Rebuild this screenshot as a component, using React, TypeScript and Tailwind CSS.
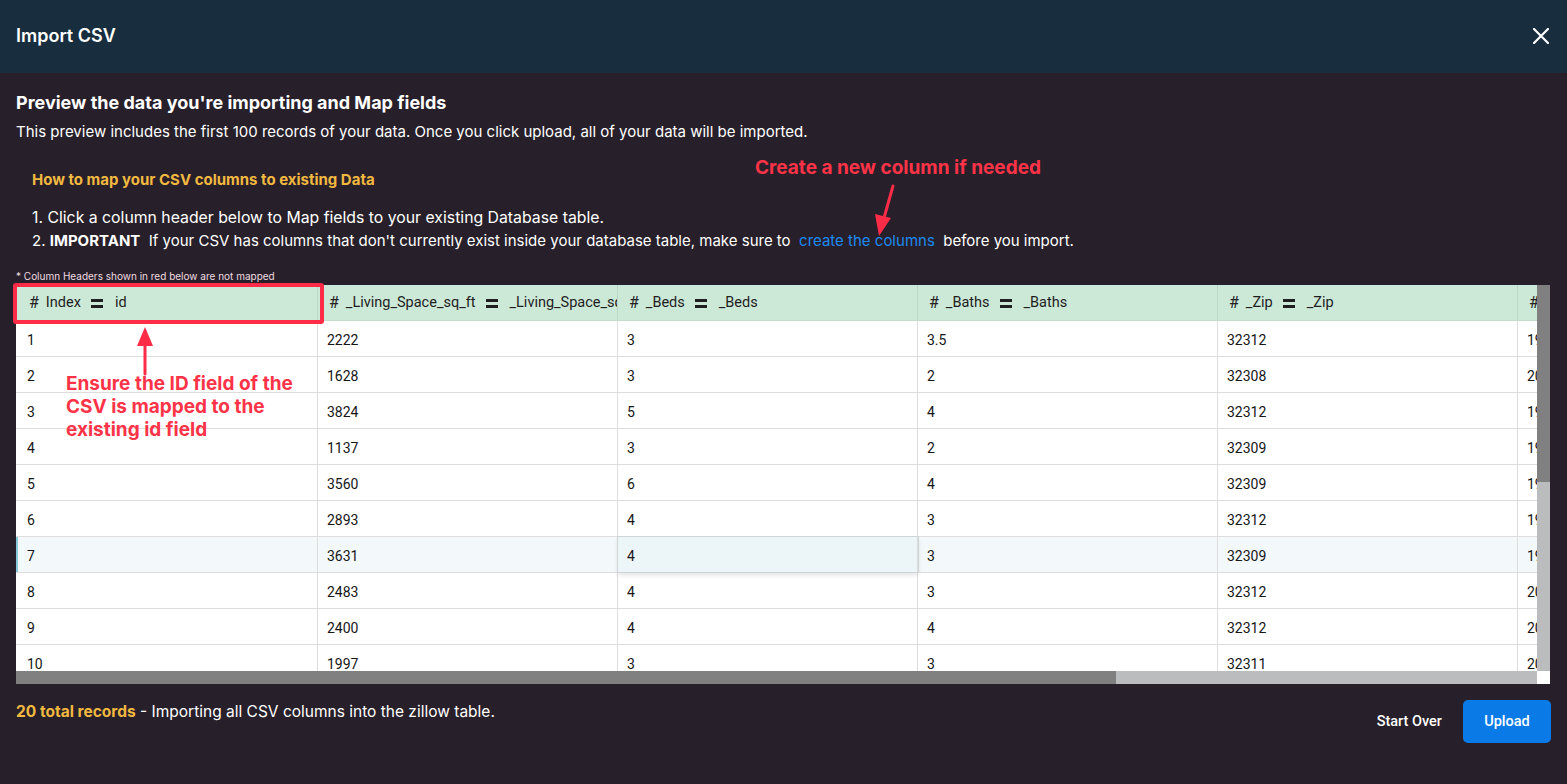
import React from "react";

const rows: [string, string, string, string, string, string][] = [
  ["1", "2222", "3", "3.5", "32312", "1998"],
  ["2", "1628", "3", "2", "32308", "2006"],
  ["3", "3824", "5", "4", "32312", "1995"],
  ["4", "1137", "3", "2", "32309", "1987"],
  ["5", "3560", "6", "4", "32309", "1999"],
  ["6", "2893", "4", "3", "32312", "1992"],
  ["7", "3631", "4", "3", "32309", "1996"],
  ["8", "2483", "4", "3", "32312", "2004"],
  ["9", "2400", "4", "4", "32312", "2008"],
  ["10", "1997", "3", "3", "32311", "2002"],
];

const headers: [string, string][] = [
  ["Index", "id"],
  ["_Living_Space_sq_ft", "_Living_Space_sq_ft"],
  ["_Beds", "_Beds"],
  ["_Baths", "_Baths"],
  ["_Zip", "_Zip"],
  ["_Year_Built", "_Year_Built"],
];

function EqIcon() {
  return (
    <svg width="12" height="9" viewBox="0 0 12 9" className="ml-[10px] mr-[12px] shrink-0">
      <rect x="0" y="0" width="12" height="3" fill="#1f1f1f" />
      <rect x="0" y="6" width="12" height="3" fill="#1f1f1f" />
    </svg>
  );
}

function HeaderCell({ name, mapped, first }: { name: string; mapped: string; first?: boolean }) {
  return (
    <div
      className={`flex items-center h-full pt-[1px] overflow-hidden whitespace-nowrap border-r border-[#b9d8c6] ${
        first ? "pl-[13px]" : "pl-[11px]"
      }`}
    >
      <span className="text-[16px] leading-none mr-[7px] text-[#222]">#</span>
      <span>{name}</span>
      <EqIcon />
      <span>{mapped}</span>
    </div>
  );
}

export default function App() {
  return (
    <div className="relative w-[1567px] h-[784px] overflow-hidden bg-[#271f29] font-['Inter',sans-serif] flex flex-col">
      {/* Header */}
      <div className="h-[73px] shrink-0 bg-[#182d3e] flex items-center justify-between pl-4 pr-[18px] pb-[2px]">
        <div className="text-white text-[18px] font-semibold">Import CSV</div>
        <svg width="16" height="16" viewBox="0 0 16 16" className="mt-[1px]">
          <path d="M1 1 L15 15 M15 1 L1 15" stroke="white" strokeWidth="2.2" strokeLinecap="square" />
        </svg>
      </div>

      {/* Body */}
      <div className="flex-1 px-4 pt-[18px]">
        <h2 className="text-white text-[18px] font-bold leading-[24px]">
          Preview the data you're importing and Map fields
        </h2>
        <p className="mt-[7px] text-white text-[15px] leading-[20px]">
          This preview includes the first 100 records of your data. Once you click upload, all of your data will be
          imported.
        </p>

        <div className="pl-4 mt-[28px]">
          <div className="text-[#f2b941] text-[15px] font-bold leading-[20px]">
            How to map your CSV columns to existing Data
          </div>
          <div className="mt-[16px] text-white text-[15px] leading-[23px]">
            <div className="text-[15.8px]">
              1. Click a column header below to Map fields to your existing Database table.
            </div>
            <div>
              2. <span className="font-bold">IMPORTANT</span>&nbsp; If your CSV has columns that don't currently exist
              inside your database table, make sure to&nbsp;{" "}
              <span className="text-[#1d8af0]">create the columns</span>&nbsp; before you import.
            </div>
          </div>
        </div>

        <div className="mt-[17px] text-[10px] leading-[14px] text-[#f0dce2]">
          * Column Headers shown in red below are not mapped
        </div>

        {/* Table */}
        <div className="mt-[2px] w-[1534px] h-[399px] flex flex-col font-['Roboto',sans-serif]">
          <div className="flex h-[386px]">
            <div className="w-[1521px] h-[386px] overflow-hidden bg-white">
              <div className="w-[1802px]">
                <div className="grid grid-cols-[302px_300px_300px_300px_300px_300px] h-[36px] bg-[#cce8d7] border-b border-[#c4dccd] text-[14.5px] text-[#1e1e1e]">
                  {headers.map((h, i) => (
                    <HeaderCell key={i} name={h[0]} mapped={h[1]} first={i === 0} />
                  ))}
                </div>
                {rows.map((r, ri) => {
                  const hl = ri === 6;
                  return (
                    <div
                      key={ri}
                      className={`grid grid-cols-[302px_300px_300px_300px_300px_300px] h-[36px] border-b border-[#dddddd] text-[14px] text-[#161616] ${
                        hl ? "bg-[#f3f8fa]" : "bg-white"
                      }`}
                    >
                      {r.map((c, ci) => {
                        const sel = hl && ci === 2;
                        return (
                          <div
                            key={ci}
                            className={`flex items-center h-full pt-[3px] whitespace-nowrap overflow-hidden border-r border-[#dddddd] ${
                              ci === 0 ? "pl-[11px]" : "pl-[9px]"
                            } ${hl && ci === 0 ? "shadow-[inset_2px_0_0_#86c9db]" : ""} ${
                              sel
                                ? "relative z-10 bg-[#ecf5f7] shadow-[0_0_0_1px_#cfd5d7,0_3px_5px_rgba(0,0,0,0.12)]"
                                : ""
                            }`}
                          >
                            {c}
                          </div>
                        );
                      })}
                    </div>
                  );
                })}
              </div>
            </div>
            <div className="w-[13px] h-[386px] flex flex-col">
              <div className="h-[197px] bg-[#808080]" />
              <div className="flex-1 bg-[#bbbcbe]" />
            </div>
          </div>
          <div className="flex h-[13px]">
            <div className="w-[1100px] bg-[#808080]" />
            <div className="w-[421px] bg-[#bbbcbe]" />
            <div className="w-[13px] bg-white" />
          </div>
        </div>

        {/* Footer */}
        <div className="mt-[16px] flex justify-between items-start">
          <div className="text-[15.5px] leading-[24px] text-white">
            <span className="font-bold text-[#f2b941]">20 total records</span> - Importing all CSV columns into the
            zillow table.
          </div>
          <div className="flex items-center gap-[9px] font-['Roboto',sans-serif]">
            <button className="h-[43px] px-3 text-white text-[14.5px] font-medium">Start Over</button>
            <button className="h-[43px] w-[88px] rounded-[5px] bg-[#0a7be6] text-white text-[14.5px] font-medium">
              Upload
            </button>
          </div>
        </div>
      </div>

      {/* Annotations */}
      <div className="absolute left-[13px] top-[283px] w-[311px] h-[41px] border-4 border-[#fe2c46] rounded-[3px]" />

      <div className="absolute left-[755px] top-[156px] text-[19px] leading-[23px] font-bold text-[#fe3347] whitespace-nowrap">
        Create a new column if needed
      </div>

      <div className="absolute left-[66px] top-[372px] text-[19px] leading-[23px] font-bold text-[#fe3347] whitespace-nowrap">
        <div>Ensure the ID field of the</div>
        <div>CSV is mapped to the</div>
        <div>existing id field</div>
      </div>

      <svg className="absolute left-[130px] top-[324px]" width="30" height="54" viewBox="0 0 30 54">
        <line x1="15" y1="50" x2="15" y2="18" stroke="#fe2c46" strokeWidth="3" strokeLinecap="round" />
        <polygon points="15,3 23,22 7,22" fill="#fe2c46" />
      </svg>

      <svg className="absolute left-[866px] top-[180px]" width="40" height="62" viewBox="0 0 40 62">
        <line x1="27" y1="6" x2="18" y2="38" stroke="#fe2c46" strokeWidth="3" strokeLinecap="round" />
        <polygon points="13,56 9,34 25,38" fill="#fe2c46" />
      </svg>
    </div>
  );
}
